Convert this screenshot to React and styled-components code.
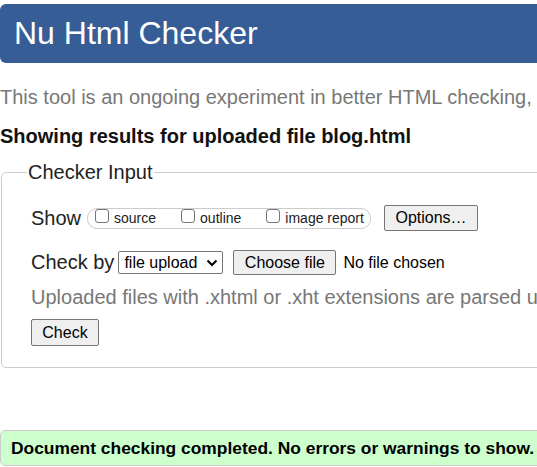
import React from "react";
import styled, { createGlobalStyle } from "styled-components";

const Global = createGlobalStyle`
  html, body { margin: 0; padding: 0; background: #fff; overflow: hidden; }
  body { font-family: "Liberation Sans", Arial, sans-serif; color: #000; }
`;

const Page = styled.div`
  width: 760px;
  padding-top: 4px;
`;

const Header = styled.h1`
  margin: 0;
  height: 59px;
  background: #365d95;
  color: #fff;
  border-radius: 6px;
  font-size: 32px;
  font-weight: normal;
  line-height: 59px;
  padding-left: 14px;
`;

const Intro = styled.p`
  margin: 20px 0 0;
  color: #777;
  font-size: 20px;
  line-height: 28px;
  white-space: nowrap;
`;

const Results = styled.h2`
  margin: 13px 0 0;
  font-size: 20px;
  font-weight: bold;
  line-height: 24px;
  color: #111;
  white-space: nowrap;
`;

const Fieldset = styled.fieldset`
  margin: 13px 0 0 1px;
  padding: 10px 30px 21px 29px;
  border: 1px solid #ccc;
  border-radius: 5px;
  min-width: 0;
`;

const Legend = styled.legend`
  font-size: 20px;
  line-height: 22px;
  padding: 0 1px;
  margin-left: -4px;
  color: #222;
`;

const Row = styled.div`
  display: flex;
  align-items: center;
  margin-top: ${(p) => p.$mt || 0}px;
`;

const Label = styled.span`
  font-size: 20px;
  color: #222;
  margin-right: ${(p) => p.$mr || 6}px;
`;

const Pill = styled.div`
  display: flex;
  align-items: center;
  height: 21px;
  width: 284px;
  border: 1px solid #ccc;
  border-radius: 10px;
  box-sizing: border-box;
  padding-left: 7px;
`;

const CheckItem = styled.label`
  display: flex;
  align-items: center;
  font-size: 14px;
  color: #222;
  margin-right: ${(p) => p.$mr || 0}px;
`;

const Box = styled.span`
  width: 12px;
  height: 12px;
  border: 1px solid #767676;
  border-radius: 3px;
  margin-right: 5px;
  margin-top: -4px;
  background: #fff;
`;

const Button = styled.button`
  font-family: "Liberation Sans", Arial, sans-serif;
  font-size: ${(p) => p.$fs || 16}px;
  background: #efefef;
  color: #000;
  border: 1px solid #767676;
  border-radius: 2px;
  height: ${(p) => p.$h || 26}px;
  width: ${(p) => p.$w}px;
  margin-left: ${(p) => p.$ml || 0}px;
  padding: 0;
`;

const Select = styled.div`
  display: flex;
  align-items: center;
  justify-content: space-between;
  box-sizing: border-box;
  width: 105px;
  height: 23px;
  border: 1px solid #767676;
  border-radius: 2px;
  padding: 0 4px 0 5px;
  font-size: 16px;
  color: #000;
`;

const FileText = styled.span`
  font-size: 16px;
  margin-left: 7px;
`;

const Hint = styled.p`
  margin: 11px 0 0;
  font-size: 20px;
  line-height: 23px;
  color: #777;
  white-space: nowrap;
`;

const Success = styled.div`
  margin-top: 62px;
  background: #ccffcc;
  border: 1px solid #ccc;
  border-radius: 5px;
  height: 36px;
  box-sizing: border-box;
  display: flex;
  align-items: center;
  padding-left: 10px;
  font-weight: bold;
  font-size: 17.4px;
  color: #000;
  white-space: nowrap;
`;

export default function App() {
  return (
    <Page>
      <Global />
      <Header>Nu Html Checker</Header>
      <Intro>This tool is an ongoing experiment in better HTML checking, and its behavior remains subject to change</Intro>
      <Results>Showing results for uploaded file blog.html</Results>
      <Fieldset>
        <Legend>Checker Input</Legend>
        <Row $mt={12}>
          <Label $mr={6}>Show</Label>
          <Pill>
            <CheckItem $mr={25}><Box />source</CheckItem>
            <CheckItem $mr={25}><Box />outline</CheckItem>
            <CheckItem><Box />image report</CheckItem>
          </Pill>
          <Button $w={94} $ml={13} $fs={16}>Options…</Button>
        </Row>
        <Row $mt={19}>
          <Label $mr={4}>Check by</Label>
          <Select>
            file upload
            <svg width="12" height="8" viewBox="0 0 12 8">
              <path d="M1.5 1.5 L6 6 L10.5 1.5" fill="none" stroke="#000" strokeWidth="2" />
            </svg>
          </Select>
          <Button $w={103} $ml={10} $h={25}>Choose file</Button>
          <FileText>No file chosen</FileText>
        </Row>
        <Hint>Uploaded files with .xhtml or .xht extensions are parsed using the XML parser.</Hint>
        <Row $mt={10}>
          <Button $w={68} $h={27}>Check</Button>
        </Row>
      </Fieldset>
      <Success>Document checking completed. No errors or warnings to show.</Success>
    </Page>
  );
}
